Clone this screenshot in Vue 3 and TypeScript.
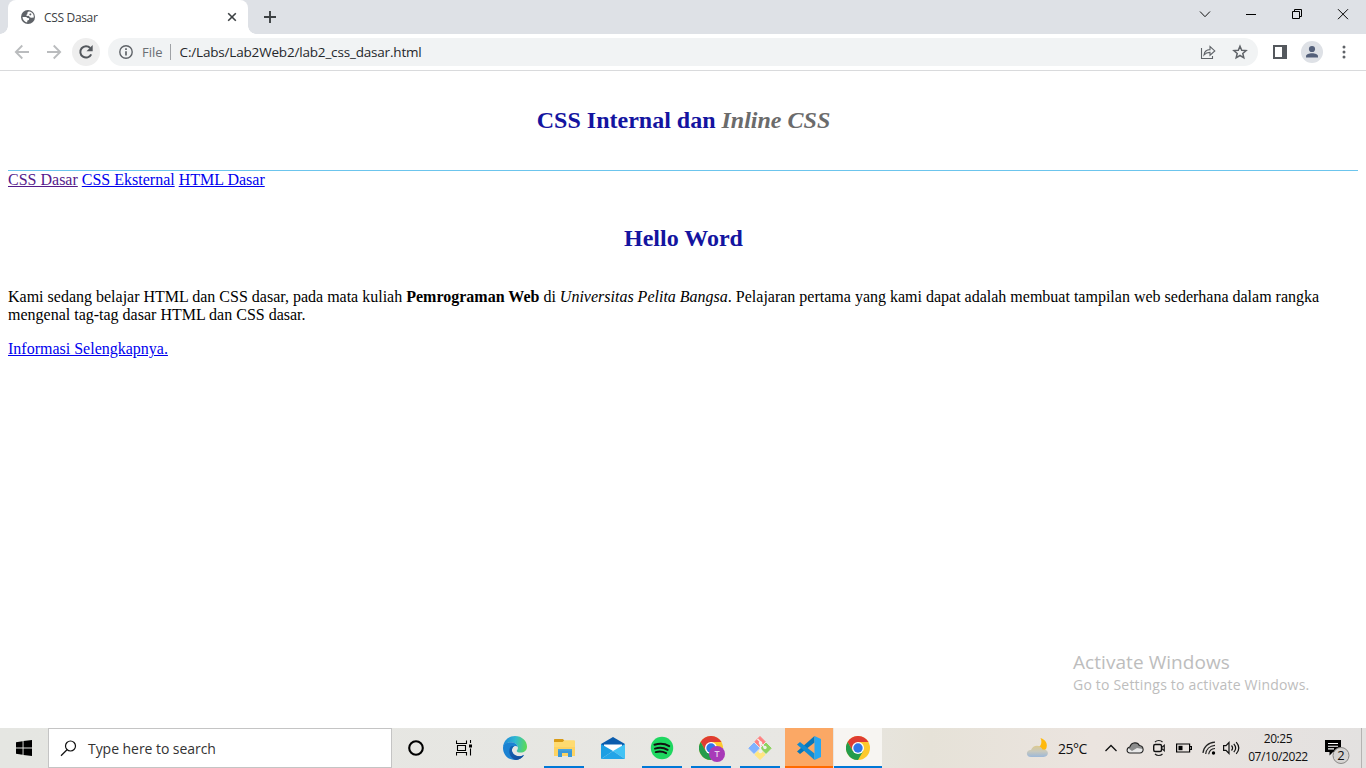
<script setup lang="ts">
interface NavLink {
  label: string
  visited: boolean
}

const links: NavLink[] = [
  { label: 'CSS Dasar', visited: true },
  { label: 'CSS Eksternal', visited: false },
  { label: 'HTML Dasar', visited: false },
]
</script>

<template>
  <div class="screen">
    <div class="tabstrip">
      <div class="tab">
        <svg class="globe" width="14" height="14" viewBox="0 0 14 14">
          <circle cx="7" cy="7" r="7" fill="#5f6368" />
          <path d="M8.200 1.500C6.300 1.700 6.100 3 6.500 4L5 5.200l1.500.8 1.300-.2 1 1.400 1.400.6 2.600-.3C13 4.500 11.200 1.800 8.200 1.500zM1.500 7h3.700l1.300 1.100 1.700.2-.3 1.600-1.500.6-.3 1.900C3.600 12 1.600 9.700 1.500 7z" fill="#fff" />
          <path d="M9 3.200l1.500.7-.8 1.500-1.500-.4z" fill="#5f6368" />
        </svg>
        <span class="tab-title">CSS Dasar</span>
        <svg class="tab-close" width="10" height="10" viewBox="0 0 10 10"><path d="M1.200 1.200l7.600 7.600M8.800 1.200L1.200 8.800" stroke="#3c4043" stroke-width="1.600" /></svg>
      </div>
      <svg class="plus" width="12" height="12" viewBox="0 0 12 12"><path d="M6 0v12M0 6h12" stroke="#3c4043" stroke-width="1.900" /></svg>
      <div class="caption">
        <svg width="46" height="30" viewBox="0 0 46 30"><path d="M18 11.500l5 5.200 5-5.200" fill="none" stroke="#111" stroke-width="1" /></svg>
        <svg width="46" height="30" viewBox="0 0 46 30"><path d="M18 14.500h10" stroke="#000" stroke-width="1" /></svg>
        <svg width="46" height="30" viewBox="0 0 46 30"><path d="M18.500 11.500h7v7h-7zM20.500 11.500v-2h7v7h-2" fill="none" stroke="#000" stroke-width="1" /></svg>
        <svg width="46" height="30" viewBox="0 0 46 30"><path d="M18 9.200l10 10M28 9.200l-10 10" stroke="#000" stroke-width="1" /></svg>
      </div>
    </div>

    <div class="toolbar">
      <svg class="arrow" width="16" height="16" viewBox="0 0 16 16"><path d="M15 8H2M8.300 1.500L1.800 8l6.500 6.500" fill="none" stroke="#babcbe" stroke-width="1.800" /></svg>
      <svg class="arrow forward" width="16" height="16" viewBox="0 0 16 16"><path d="M1 8h13M7.700 1.500L14.200 8l-6.500 6.500" fill="none" stroke="#babcbe" stroke-width="1.800" /></svg>
      <div class="reload">
        <svg width="16" height="16" viewBox="0 0 16 16"><path d="M13.200 10.300A5.700 5.700 0 1 1 12.200 4" fill="none" stroke="#54585d" stroke-width="2" /><path d="M14.700 1v6.200H8.500z" fill="#54585d" /></svg>
      </div>
      <div class="omnibox">
        <svg class="info" width="14" height="14" viewBox="0 0 14 14"><circle cx="7" cy="7" r="6.200" fill="none" stroke="#5f6368" stroke-width="1.400" /><path d="M7 6.200v4.300M7 3.300v1.700" stroke="#5f6368" stroke-width="1.700" /></svg>
        <span class="scheme">File</span>
        <span class="divider"></span>
        <span class="url">C:/Labs/Lab2Web2/lab2_css_dasar.html</span>
        <svg class="share" width="16" height="16" viewBox="0 0 16 16"><path d="M1.500 4v10.500h11v-2.500M4 11c.5-3.800 2.700-5.300 6-5.400V2.500l4.800 4.400-4.800 4.300V8.400C7.300 8.400 5.500 9.200 4 11z" fill="none" stroke="#5f6368" stroke-width="1.100" /></svg>
        <svg class="star" width="16" height="16" viewBox="0 0 16 16"><path d="M8 2.200l1.700 4 4.400.4-3.300 2.900 1 4.300L8 11.500l-3.800 2.300 1-4.300-3.300-2.900 4.400-.4z" fill="none" stroke="#5f6368" stroke-width="1.500" /></svg>
      </div>
      <svg class="panel" width="14" height="14" viewBox="0 0 14 14"><path d="M1 1h12v12H1z" fill="#fff" stroke="#54585d" stroke-width="2" /><path d="M9 1h4v12H9z" fill="#54585d" /></svg>
      <svg class="avatar" width="22" height="22" viewBox="0 0 22 22"><circle cx="11" cy="11" r="11" fill="#dee1e6" /><circle cx="11" cy="8" r="3.100" fill="#54607a" /><path d="M5 16.500v-1.200c0-4 12-4 12 0v1.200z" fill="#54607a" /></svg>
      <svg class="dots" width="4" height="14" viewBox="0 0 4 14"><circle cx="2" cy="2" r="1.500" fill="#5f6368" /><circle cx="2" cy="7" r="1.500" fill="#5f6368" /><circle cx="2" cy="12" r="1.500" fill="#5f6368" /></svg>
    </div>

    <main class="page">
      <header><h1>CSS Internal dan <i>Inline CSS</i></h1></header>
      <nav>
        <template v-for="link in links" :key="link.label"><a :class="{ visited: link.visited }">{{ link.label }}</a>{{ ' ' }}</template>
      </nav>
      <section>
        <h1 class="hello">Hello Word</h1>
        <p>
          <span class="first">Kami sedang belajar HTML dan CSS dasar, pada mata kuliah <b>Pemrograman Web</b> di <i>Universitas Pelita Bangsa</i>. Pelajaran pertama yang kami dapat adalah membuat tampilan web sederhana dalam rangka</span>
          mengenal tag-tag dasar HTML dan CSS dasar.
        </p>
        <a>Informasi Selengkapnya.</a>
      </section>
      <aside class="watermark">
        <div class="activate">Activate Windows</div>
        <div class="settings">Go to Settings to activate Windows.</div>
      </aside>
    </main>

    <footer class="taskbar">
      <div class="start">
        <svg width="16" height="16" viewBox="0 0 16 16"><path d="M0 2.200l6.600-.9v6.200H0zM7.500 1.100L16 0v7.500H7.500zM0 8.500h6.600v6.200L0 13.800zM7.500 8.500H16V16l-8.500-1.100z" fill="#000" /></svg>
      </div>
      <div class="search">
        <svg width="17" height="17" viewBox="0 0 17 17"><circle cx="10.500" cy="6" r="5" fill="none" stroke="#111" stroke-width="1.200" /><path d="M7 9.700L1 15.700" stroke="#111" stroke-width="1.300" /></svg>
        <span>Type here to search</span>
      </div>
      <div class="sys">
        <svg width="16" height="16" viewBox="0 0 16 16"><circle cx="8" cy="8" r="6.800" fill="none" stroke="#000" stroke-width="2.100" /></svg>
      </div>
      <div class="sys">
        <svg width="16" height="16" viewBox="0 0 16 16"><path d="M.5.500v3h10v-3M.5 15.500v-3h10v3M1.500 5.500h8v5h-8zM14.500 0v3M14.500 8.500V15.500" fill="none" stroke="#000" stroke-width="1.100" /><path d="M13 4.500h3v3h-3z" /></svg>
      </div>
      <div class="apps">
        <div class="app">
          <svg width="24" height="24" viewBox="0 0 24 24">
            <defs>
              <linearGradient id="edgeTop" x1="0" y1=".4" x2="1" y2=".5"><stop offset="0" stop-color="#1c86d8" /><stop offset=".5" stop-color="#31b9d1" /><stop offset="1" stop-color="#5cdb54" /></linearGradient>
              <linearGradient id="edgeLow" x1="0" y1="0" x2="1" y2="1"><stop offset="0" stop-color="#1463b5" /><stop offset="1" stop-color="#114a99" /></linearGradient>
            </defs>
            <path d="M0 11C.7 4.500 5.500 0 12 0c7 0 12 5 12 10.600 0 4.100-3 6-6.300 6-2.600 0-4.200-.9-4-1.800.2-.7 1.200-1.200 1.200-2.900C14.900 8 10 5.500 6 6.500 3.500 7 1.500 8.500 0 11z" fill="url(#edgeTop)" />
            <path d="M0 12C0 8.500 3.500 6.200 7.500 6.300c3.800 0 6.700 2 7.200 4.700-2.200-2.300-6-.2-5.800 3.300.2 4 5 7.200 10 5.400.8-.3 1.500-.6 2.200-1C18.800 22.200 15.700 24 12 24 5 24 0 18.500 0 12z" fill="#1b82d2" />
            <path d="M7.500 10.800c-3 4.500-.5 11.800 5.500 13.100 3.400-.3 6.300-2.300 8.200-5-4.600 2.500-10.500 1.100-12-3.200-.7-2 .1-4.300 1.900-5.400-1.600-.6-2.700-.3-3.600.5z" fill="url(#edgeLow)" />
          </svg>
        </div>
        <div class="app running">
          <svg width="24" height="24" viewBox="0 0 24 24"><path d="M2 4c0-.6.400-1 1-1h8l1.500 2-1.500 2H2z" fill="#d99b15" /><path d="M2 6h8.500l2-1.800H22a1 1 0 0 1 1 1V20H2z" fill="#ffdb70" /><path d="M2 11h21v9H2z" fill="#fccd58" opacity=".6" /><path d="M6 13h14v8h-4v-4h-6v4H6z" fill="#3b99d8" /><path d="M6 13h14v1.500H6z" fill="#4ca6df" /></svg>
        </div>
        <div class="app">
          <svg width="24" height="24" viewBox="0 0 24 24"><path d="M0 8l12-7 12 7v4H0z" fill="#0b5cad" /><path d="M3 8.500h18v3L12 17l-9-5.500z" fill="#fff" /><path d="M0 8l12 7L0 23z" fill="#1d9fe3" /><path d="M12 15L24 8v15z" fill="#42c3f5" /><path d="M0 23L12 15 24 23z" fill="#23a5e8" /></svg>
        </div>
        <div class="app running">
          <svg width="24" height="24" viewBox="0 0 24 24"><circle cx="12" cy="12" r="11.200" fill="#1ed760" /><path d="M4.500 8.800c5-1.600 10.600-1.100 14.700 1.300M5 12.600c4.500-1.300 9-.8 12.600 1.200M5.700 16.100c3.800-1 7.400-.6 10.400 1" fill="none" stroke="#111" stroke-width="2" stroke-linecap="round" /></svg>
        </div>
        <div class="app running profile">
          <svg width="28" height="27" viewBox="0 0 28 27">
            <circle cx="12" cy="12" r="12" fill="#fdc92d" /><path d="M1.600 6A12 12 0 0 1 22.400 6H12L6.800 15z" fill="#df3c32" /><path d="M1.600 6A12 12 0 0 0 12 24l5.200-9H6.800z" fill="#249c4c" /><circle cx="12" cy="12" r="6" fill="#fff" /><circle cx="12" cy="12" r="4.700" fill="#3076e8" />
            <circle cx="18" cy="18" r="8" fill="#a83ab8" /><text x="18" y="21.300" text-anchor="middle" font-size="9" font-weight="600" fill="#e8d0ec">T</text>
          </svg>
        </div>
        <div class="app running">
          <svg width="24" height="24" viewBox="0 0 24 24"><path d="M12 .5l5.200 5.200L12 10.900 6.800 5.700z" fill="#ff8080" stroke="#ff8080" stroke-linejoin="round" /><path d="M6 7l5.200 5.200L6 17.400.800 12.200z" fill="#80b3ff" stroke="#80b3ff" stroke-linejoin="round" /><path d="M18 7l5.200 5.200-5.200 5.200-5.200-5.200z" fill="#8dd35f" stroke="#8dd35f" stroke-linejoin="round" /><path d="M12 13.500l5.200 5L12 23.500l-5.200-5z" fill="#ffe680" stroke="#ffe680" stroke-linejoin="round" /><path d="M9.500 3l3 3v9M12.500 7l4 4" fill="none" stroke="#f1f0ec" stroke-width="1.500" /><circle cx="12.500" cy="7" r="1.800" fill="#f1f0ec" /><circle cx="12.500" cy="15.200" r="2" fill="#f1f0ec" /><circle cx="17" cy="11.500" r="1.700" fill="#f1f0ec" /></svg>
        </div>
        <div class="app attention">
          <svg width="24" height="24" viewBox="0 0 24 24"><path d="M0 15.500L17.500 0v6.500L3 18z" fill="#0877b9" /><path d="M0 8.500L3 6l14.500 11.500V24z" fill="#128bd1" /><path d="M17.500 0L24 3v18l-6.500 3z" fill="#27a7f2" /></svg>
        </div>
        <div class="app active">
          <svg width="24" height="24" viewBox="0 0 24 24"><circle cx="12" cy="12" r="12" fill="#fdc92d" /><path d="M1.600 6A12 12 0 0 1 22.400 6H12L6.800 15z" fill="#df3c32" /><path d="M1.600 6A12 12 0 0 0 12 24l5.200-9H6.800z" fill="#249c4c" /><circle cx="12" cy="12" r="6" fill="#fff" /><circle cx="12" cy="12" r="4.700" fill="#3076e8" /></svg>
        </div>
      </div>

      <div class="tray">
        <svg class="weather" width="24" height="22" viewBox="0 0 24 22"><defs><linearGradient id="cloud" x1="0" y1="0" x2="0" y2="1"><stop offset="0" stop-color="#dcc98d" /><stop offset=".5" stop-color="#c9c9bd" /><stop offset="1" stop-color="#9cb8d9" /></linearGradient></defs><path d="M14.500 1c5 1.500 8 6 5.500 11-3 3-8 2.500-11-1.500 5 1 8-4 5.500-9.500z" fill="#ffb90d" /><path d="M5 20c-5.500 0-5.500-7 0-7 2-6 10-5.500 11.500-.5 7-1 7 7.500 1 7.500z" fill="url(#cloud)" /></svg>
        <span class="temp">25°C</span>
        <svg class="chev" width="14" height="10" viewBox="0 0 14 10"><path d="M1.500 8L7 2.500 12.500 8" fill="none" stroke="#111" stroke-width="1.300" /></svg>
        <svg class="onedrive" width="18" height="14" viewBox="0 0 18 14"><path d="M4 12C0 12 .3 6.800 3.800 6c1.700-5.200 8-5.200 9.500-1.500 5 .5 5 7.500.5 7.500z" fill="#e8e8e8" /><path d="M2.500 7.500L3.800 6c1.700-5.200 8-5.200 9.500-1.500 2.500.3 3.500 2 3.500 3.500L11 7l-5 3z" fill="#8c8c8c" /><path d="M4 12C0 12 .3 6.800 3.800 6c1.700-5.200 8-5.200 9.500-1.500 5 .5 5 7.500.5 7.500z" fill="none" stroke="#222" stroke-width="1.100" /></svg>
        <svg class="meet" width="14" height="18" viewBox="0 0 14 18"><path d="M3 3c2-2 5.500-2 7.500 0M3 15c2 2 5.500 2 7.500 0M10 8.300l2.300-2v5.400L10 9.700" fill="none" stroke="#222" stroke-width="1.200" /><rect x="1.700" y="5.500" width="7.800" height="7" rx="1.500" fill="none" stroke="#111" stroke-width="1.400" /></svg>
        <svg class="battery" width="16" height="10" viewBox="0 0 16 10"><path d="M.6 1h13v8H.6zM14 3.500h1.400v3H14" fill="none" stroke="#000" stroke-width="1.200" /><path d="M2.500 2.800h4v4.400h-4z" /></svg>
        <svg class="wifi" width="14" height="14" viewBox="0 0 14 14"><path d="M1 12C1.500 6 6 1.500 13 1.200M3.700 13C4.200 8.500 7.500 4.800 13 4.400M6.700 13.300c.4-3.200 2.800-5.500 6.300-5.800" fill="none" stroke="#222" stroke-width="1.200" /><circle cx="11.500" cy="12" r="1.700" /></svg>
        <svg class="volume" width="18" height="16" viewBox="0 0 18 16"><path d="M1.600 5.700H4L7 2.500v11L4 10.300H1.600zM9.500 5.500c1.300 1.500 1.300 3.500 0 5M11.800 3.800c2.300 2.600 2.300 5.800 0 8.400M14.200 2.200c3.300 3.700 3.300 7.900 0 11.600" fill="none" stroke="#111" stroke-width="1.200" /></svg>
        <div class="clock"><span class="time">20:25</span><span class="date">07/10/2022</span></div>
        <svg class="notice" width="26" height="26" viewBox="0 0 26 26"><path d="M0 1h16v12H8l-3.500 3.500V13H0z" /><path d="M3 4.500h10M3 7.200h10M3 9.900h6" stroke="#fff" stroke-width="1.100" /><circle cx="16" cy="16.500" r="8" fill="#d6d4d2" stroke="#898785" /><text x="16" y="21.200" text-anchor="middle" font-size="13" font-weight="500" fill="#111">2</text></svg>
      </div>
      <div class="desktop"></div>
    </footer>
  </div>
</template>

<style>
body { margin: 0; overflow: hidden; }
</style>

<style scoped>
.screen { width: 1366px; height: 768px; display: flex; flex-direction: column; background: #fff; font-family: "Open Sans", "Noto Sans", sans-serif; overflow: hidden; }
svg { display: block; flex: none; }
span { white-space: nowrap; }
.tabstrip { height: 34px; flex: none; background: #dee1e6; display: flex; align-items: flex-start; }
.tab { width: 240px; height: 34px; margin-left: 8px; box-sizing: border-box; border-radius: 8px 8px 0 0; background: #fff; display: flex; align-items: center; position: relative; padding: 0 11px 0 13px; }
.tab::before, .tab::after { content: ""; position: absolute; bottom: 0; width: 8px; height: 8px; }
.tab::before { left: -8px; background: radial-gradient(circle at 0 0, transparent 7.500px, #fff 8px); }
.tab::after { right: -8px; background: radial-gradient(circle at 100% 0, transparent 7.500px, #fff 8px); }
.tab-title { margin-left: 9px; font-size: 12px; letter-spacing: -0.330px; color: #3c4043; }
.tab-close { margin-left: auto; }
.plus { margin: 11px 0 0 16px; }
.caption { display: flex; margin-left: auto; }
.toolbar { height: 36px; flex: none; border-bottom: 1px solid #d9dadc; display: flex; align-items: center; }
.arrow { margin-left: 14px; }
.forward { margin-left: 16px; }
.reload { width: 28px; height: 28px; margin-left: 10px; border-radius: 50%; background: #eee; display: grid; place-items: center; }
.omnibox { width: 1150px; height: 28px; margin-left: 8px; box-sizing: border-box; border-radius: 14px; background: #f1f3f4; display: flex; align-items: center; padding: 0 10px 0 11px; font-size: 14px; }
.scheme { color: #6a6e73; margin-left: 9px; font-size: 13px; }
.divider { width: 1px; height: 16px; background: #9fa2a6; margin: 0 9px 0 7px; }
.url { color: #24272b; font-size: 13.500px; letter-spacing: -0.180px; }
.share { margin-left: auto; }
.star { margin-left: 16px; }
.panel { margin-left: 15px; }
.avatar { margin-left: 14px; }
.dots { margin-left: 19px; }
.page { flex: 1; min-height: 0; padding: 0 8px; display: flex; flex-direction: column; font-family: "Liberation Serif", serif; font-size: 16px; line-height: 18px; color: #000; }
header { height: 99px; border-bottom: 1px solid #6cc5ed; }
h1 { margin: 0; padding: 36px 0 0 1px; text-align: center; color: #1414a0; font-size: 24px; line-height: 27px; }
h1 i { color: #6b6b6b; }
nav { height: 18px; }
a { color: #00e; text-decoration: underline; }
a.visited { color: #551a8b; }
p { margin: 36px 0 16px; white-space: nowrap; }
.first { display: block; }
.watermark { width: 285px; margin: auto 0 33px auto; font-family: "Open Sans", sans-serif; color: #bdbdbd; white-space: nowrap; }
.activate { font-size: 19px; line-height: 26px; letter-spacing: 0.060px; }
.settings { font-size: 14px; line-height: 20px; letter-spacing: 0.200px; }
.taskbar { height: 40px; flex: none; display: flex; align-items: stretch; background: linear-gradient(90deg, #e5e6e2 0, #e8e7e3 60%, #e6e2d8 68%, #ebe4df 80%, #e3e1e0 100%); }
.start { width: 48px; display: grid; place-items: center; }
.search { width: 344px; box-sizing: border-box; background: #fff; border: 1px solid #c4c4c4; display: flex; align-items: center; padding-left: 11px; }
.search span { margin-left: 11px; font-size: 14px; letter-spacing: -0.050px; color: #333; }
.sys { width: 48px; display: grid; place-items: center; }
.apps { display: flex; gap: 1px; margin-left: 3px; }
.app { width: 48px; height: 40px; display: grid; place-items: center; box-sizing: border-box; }
.running { background: linear-gradient(#0078d7, #0078d7) center bottom / 40px 2px no-repeat; }
.profile { padding: 3px 0 0 4px; background-origin: border-box; }
.attention { background: #fba865; border-bottom: 2px solid #ff6a00; padding-top: 2px; }
.active { background: #f7f5f2; border-bottom: 2px solid #0078d7; padding-top: 2px; }
.tray { display: flex; align-items: center; margin-left: auto; color: #111; }
.temp { width: 38px; margin-left: 8px; font-size: 14px; letter-spacing: -0.500px; }
.chev { margin-left: 8px; }
.onedrive { margin-left: 8px; }
.meet { margin-left: 8px; }
.battery { margin-left: 10px; }
.wifi { margin-left: 10px; }
.volume { margin-left: 6px; }
.clock { width: 62px; margin-left: 7px; height: 40px; display: flex; flex-direction: column; align-items: center; font-size: 12px; line-height: 18px; padding-top: 2px; box-sizing: border-box; letter-spacing: -0.400px; }
.notice { margin: 8px 0 0 16px; }
.desktop { width: 4px; margin-left: 10px; border-left: 1px solid #b5b3b2; }
</style>
